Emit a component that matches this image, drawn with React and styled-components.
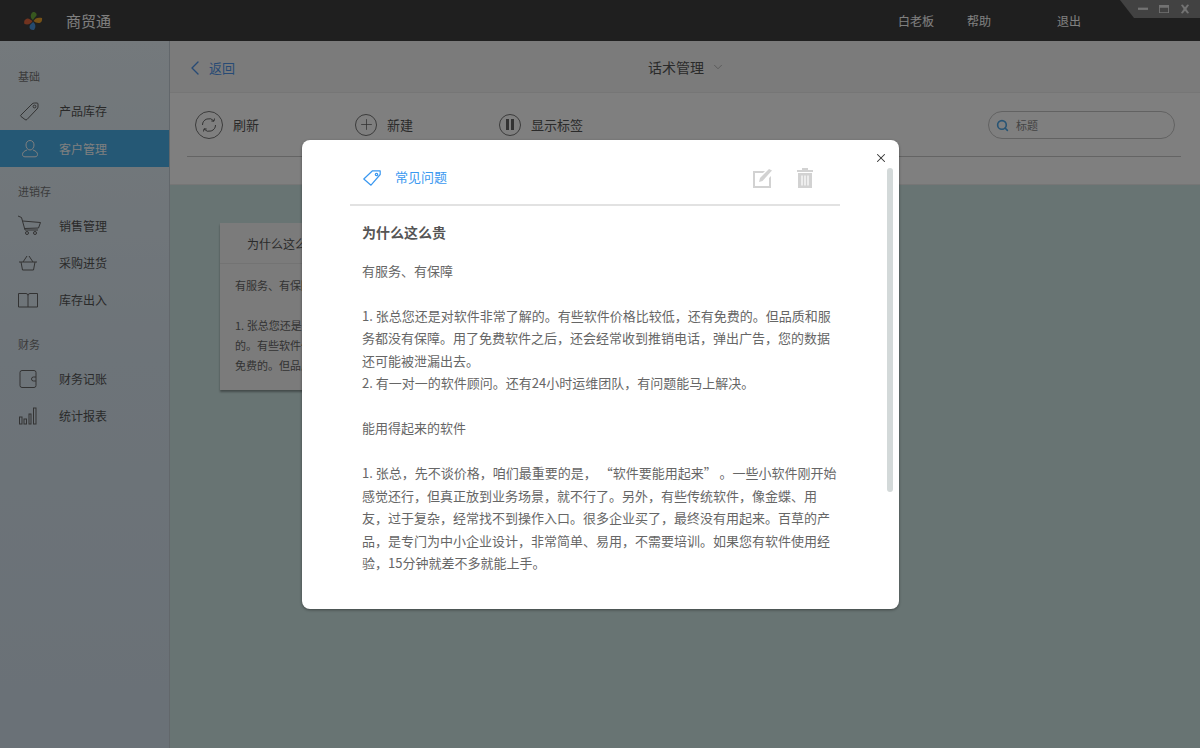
import React from "react";
import styled, { createGlobalStyle } from "styled-components";
import { ChevronLeft, ChevronDown, Plus, Search, X } from "lucide-react";

const GlobalStyle = createGlobalStyle`
  html, body { margin: 0; padding: 0; height: 100%; }
  body {
    font-family: "Noto Sans CJK SC", "Liberation Sans", sans-serif;
    overflow: hidden;
  }
  * { box-sizing: border-box; }
`;

const Page = styled.div`
  position: relative;
  width: 1200px;
  height: 748px;
  display: flex;
  flex-direction: column;
  overflow: hidden;
  background: #d0e8e6;
`;

const TitleBar = styled.header`
  height: 41px;
  flex: none;
  display: flex;
  align-items: center;
  background: #3e3e3e;
  color: #fff;
  position: relative;
`;

const Logo = styled.svg`
  width: 20px;
  height: 20px;
  margin-left: 23px;
`;

const AppName = styled.span`
  margin: -1px 0 0 23px;
  font-size: 15px;
  color: #fff;
`;

const TopLink = styled.a`
  position: absolute;
  top: 12px;
  left: ${(p) => p.$left}px;
  font-size: 12px;
  line-height: 18px;
  color: #fff;
`;

const WindowTab = styled.div`
  position: absolute;
  top: 0;
  right: 0;
  width: 80px;
  height: 18px;
  display: flex;
  align-items: center;
  justify-content: flex-end;
  gap: 11px;
  padding-right: 10px;
  background: #848484;
  clip-path: polygon(0 0, 100% 0, 100% 100%, 14px 100%);
  svg {
    width: 10px;
    height: 10px;
    fill: #e4e4e4;
  }
`;

const Body = styled.div`
  flex: 1;
  display: flex;
  min-height: 0;
`;

const Sidebar = styled.nav`
  width: 170px;
  flex: none;
  background: linear-gradient(180deg, #e8f2f8 0%, #dbe8f2 45%, #d4e2ee 100%);
  border-right: 1px solid #c4ced6;
  padding-top: 26px;
`;

const NavGroup = styled.div`
  margin-bottom: ${(p) => p.$gap}px;
`;

const GroupLabel = styled.div`
  height: 18px;
  margin-bottom: ${(p) => p.$gap}px;
  padding-left: 18px;
  font-size: 11px;
  line-height: 18px;
  color: #777;
`;

const NavItem = styled.div`
  height: ${(p) => p.$height || 37}px;
  display: flex;
  align-items: center;
  padding-left: 18px;
  gap: 21px;
  font-size: 12px;
  background: ${(p) => (p.$active ? "#4ab0ea" : "transparent")};
  color: ${(p) => (p.$active ? "#fff" : "#555")};
  svg {
    width: 20px;
    height: 20px;
    flex: none;
    fill: none;
    overflow: visible;
    stroke: ${(p) => (p.$active ? "#fff" : "#666")};
    stroke-width: 1;
  }
`;

const Main = styled.main`
  flex: 1;
  display: flex;
  flex-direction: column;
  min-width: 0;
`;

const SubHeader = styled.div`
  height: 52px;
  flex: none;
  position: relative;
  display: flex;
  align-items: center;
  padding: 2px 0 0 13px;
  background: #f7f7f7;
  border-bottom: 1px solid #ececec;
`;

const BackLink = styled.a`
  display: flex;
  align-items: center;
  gap: 2px;
  font-size: 13px;
  color: #4f95ea;
`;

const PageTitle = styled.div`
  position: absolute;
  left: 478px;
  top: 16px;
  display: flex;
  align-items: center;
  gap: 7px;
  font-size: 14px;
  line-height: 20px;
  color: #555;
`;

const Toolbar = styled.div`
  height: 92px;
  flex: none;
  background: #ffffff;
  padding: 0 19px 0 17px;
  border-bottom: 1px solid #ececec;
`;

const ToolRow = styled.div`
  height: 64px;
  display: flex;
  align-items: center;
  border-bottom: 1px solid #c8c8c8;
  position: relative;
`;

const ToolButton = styled.div`
  display: flex;
  align-items: center;
  gap: 10px;
  width: ${(p) => p.$width}px;
  padding-left: 8px;
  font-size: 13px;
  color: #555;
`;

const ToolIcon = styled.span`
  width: ${(p) => p.$size}px;
  height: ${(p) => p.$size}px;
  border-radius: 50%;
  border: 1px solid #777;
  display: flex;
  align-items: center;
  justify-content: center;
  color: #666;
`;

const SearchBox = styled.div`
  position: absolute;
  left: 801px;
  top: 18px;
  width: 187px;
  height: 28px;
  border: 1px solid #c4c4c4;
  border-radius: 14px;
  display: flex;
  align-items: center;
  gap: 7px;
  padding-left: 7px;
  font-size: 11px;
  color: #888;
  background: #fff;
`;

const Board = styled.div`
  flex: 1;
  padding: 38px 0 0 50px;
`;

const NoteCard = styled.article`
  width: 300px;
  height: 167px;
  background: #f6f6f6;
  box-shadow: 0 2px 2px rgba(0, 0, 0, 0.35);
`;

const NoteTitle = styled.div`
  height: 41px;
  padding-left: 27px;
  font-size: 12px;
  line-height: 41px;
  color: #555;
  border-bottom: 1px solid #e6e6e6;
  white-space: nowrap;
`;

const NoteText = styled.p`
  margin: 0;
  padding: 11px 15px;
  font-size: 11px;
  line-height: 20px;
  color: #666;
  white-space: nowrap;
  overflow: hidden;
`;

const Overlay = styled.div`
  position: absolute;
  inset: 0;
  background: rgba(0, 0, 0, 0.5);
`;

const Modal = styled.section`
  position: absolute;
  left: 302px;
  top: 140px;
  width: 597px;
  height: 469px;
  background: #fff;
  border-radius: 8px;
  padding: 0 59px 0 48px;
  box-shadow: 0 1px 3px rgba(0, 0, 0, 0.4);
`;

const CloseButton = styled.button`
  position: absolute;
  right: 10px;
  top: 10px;
  width: 16px;
  height: 16px;
  padding: 0;
  border: 0;
  background: none;
  color: #333;
  display: flex;
  align-items: center;
  justify-content: center;
`;

const ScrollThumb = styled.div`
  position: absolute;
  left: 585px;
  top: 28px;
  width: 6px;
  height: 324px;
  border-radius: 3px;
  background: #d3d9d9;
`;

const ModalHead = styled.div`
  height: 66px;
  display: flex;
  align-items: center;
  padding: 9px 24px 0 13px;
  border-bottom: 2px solid #e2e2e2;
`;

const TagIcon = styled.svg`
  width: 18px;
  height: 16px;
  margin-top: 2px;
  fill: none;
  stroke: #3a98f0;
  stroke-width: 1.2;
`;

const TagName = styled.span`
  margin-left: 14px;
  flex: 1;
  font-size: 13px;
  color: #3a98f0;
`;

const HeadIcon = styled.svg`
  width: 22px;
  height: 22px;
  margin: 2px 0 0 20px;
  fill: #d2d2d2;
`;

const ModalBody = styled.div`
  padding: 15px 1px 0 12px;
`;

const ModalTitle = styled.h2`
  margin: 0 0 16.5px;
  font-size: 14px;
  line-height: 22px;
  font-weight: 700;
  color: #555;
`;

const ModalText = styled.p`
  margin: 0;
  font-size: 13px;
  line-height: 22.5px;
  color: #666;
`;

const navGroups = [
  {
    label: "基础",
    labelGap: 6,
    gap: 15,
    items: [
      {
        text: "产品库存",
        height: 39,
        icon: (
          <>
            <path d="M3 14 L14 3 Q15 2 16.5 2 L19 2 Q20 2 20 3 L20 6 Q20 7 19 8 L9 18.5 Q8 19.5 7 18.5 L3 15.5 Q2 14.8 3 14 Z" />
            <circle cx="16.5" cy="5.5" r="1.4" />
          </>
        ),
      },
      {
        text: "客户管理",
        active: true,
        icon: (
          <>
            <path d="M12 1.5 C9.5 1.5 8 3.5 8 6 C8 8.5 9.5 11 12 11 C14.5 11 16 8.5 16 6 C16 3.5 14.5 1.5 12 1.5 Z" />
            <path d="M9 11 C6 12 4.5 13.5 4.5 15.5 C4.5 17 5.5 17.8 7 17.8 L17 17.8 C18.5 17.8 19.5 17 19.5 15.5 C19.5 13.5 18 12 15 11" />
          </>
        ),
      },
    ],
  },
  {
    label: "进销存",
    labelGap: 7,
    gap: 17,
    items: [
      {
        text: "销售管理",
        icon: (
          <>
            <path d="M0 0 L3.5 1.5 L7 14 L20 14 M4.5 5 L22.5 6.5 L20.5 12 L6.5 12.5" />
            <circle cx="9" cy="17" r="1.5" />
            <circle cx="17" cy="17" r="1.5" />
          </>
        ),
      },
      {
        text: "采购进货",
        icon: <path d="M1 9 L19 9 M3 9 L4.5 17 L15.5 17 L17 9 M5 9 L9 3 M15 9 L11 3" />,
      },
      {
        text: "库存出入",
        icon: <path d="M0.5 3.5 L8 3.5 Q10 3.5 10 5.5 L10 17 L0.5 17 Z M10 5.5 Q10 3.5 12 3.5 L19.5 3.5 L19.5 17 L10 17" />,
      },
    ],
  },
  {
    label: "财务",
    labelGap: 7,
    gap: 0,
    items: [
      {
        text: "财务记账",
        icon: (
          <>
            <rect x="2" y="1.5" width="16" height="17" rx="2" />
            <path d="M18 8 L15.5 8 Q13.5 8 13.5 10 Q13.5 12 15.5 12 L18 12" />
          </>
        ),
      },
      {
        text: "统计报表",
        icon: (
          <>
            <rect x="1.5" y="11" width="2.5" height="7" />
            <rect x="6" y="13" width="2.5" height="5" />
            <rect x="11" y="8" width="2" height="10" />
            <rect x="15.5" y="2" width="2.5" height="16" />
          </>
        ),
      },
    ],
  },
];

export default function App() {
  return (
    <Page>
      <GlobalStyle />
      <TitleBar>
        <Logo viewBox="0 0 20 20">
          <path d="M10 9 C7 7 7 3 10 1 C13 1 14 3 13.5 4.5 C12.5 6 11 7 10 9 Z" fill="#6fae3e" />
          <path d="M10.5 10 C12 7 15 6 19 7 C19.5 10 18 12 15.5 12 C13.5 12 12 11 10.5 10 Z" fill="#eda32c" />
          <path d="M10 11 C13 13 13 16.5 11 19 C8.5 19.5 6.5 18 6.5 16 C6.5 14 8.5 12.5 10 11 Z" fill="#4a95de" />
          <path d="M9.5 10 C8 13 5 14 1.5 13 C0.5 10 2 8 4.5 7.5 C6.5 7.5 8 9 9.5 10 Z" fill="#e2673e" />
        </Logo>
        <AppName>商贸通</AppName>
        <TopLink $left={898}>白老板</TopLink>
        <TopLink $left={967}>帮助</TopLink>
        <TopLink $left={1057}>退出</TopLink>
        <WindowTab>
          <svg viewBox="0 0 11 11">
            <rect x="0" y="4" width="11" height="2.5" />
          </svg>
          <svg viewBox="0 0 11 11">
            <path d="M0 1 H11 V10 H0 Z M1 4 V9 H10 V4 Z" fillRule="evenodd" />
          </svg>
          <svg viewBox="0 0 11 11">
            <path d="M1 1 L3 0.5 L5.5 3.5 L8 0.5 L10 1 L7 5.5 L10 10 L8 10.5 L5.5 7.5 L3 10.5 L1 10 L4 5.5 Z" />
          </svg>
        </WindowTab>
      </TitleBar>
      <Body>
        <Sidebar>
          {navGroups.map((group) => (
            <NavGroup key={group.label} $gap={group.gap}>
              <GroupLabel $gap={group.labelGap}>{group.label}</GroupLabel>
              {group.items.map((item) => (
                <NavItem key={item.text} $active={item.active} $height={item.height}>
                  <svg viewBox="0 0 20 20">{item.icon}</svg>
                  {item.text}
                </NavItem>
              ))}
            </NavGroup>
          ))}
        </Sidebar>
        <Main>
          <SubHeader>
            <BackLink>
              <ChevronLeft size={24} strokeWidth={1.4} />
              返回
            </BackLink>
            <PageTitle>
              话术管理
              <ChevronDown size={14} strokeWidth={1.2} color="#999" />
            </PageTitle>
          </SubHeader>
          <Toolbar>
            <ToolRow>
              <ToolButton $width={160}>
                <ToolIcon $size={28}>
                  <svg width="18" height="18" viewBox="0 0 18 18" fill="none" stroke="currentColor" strokeWidth="1">
                    <path d="M2.5 9 A6.5 6.5 0 0 1 14 5 M15.5 9 A6.5 6.5 0 0 1 4 13" />
                    <path d="M14.5 2.5 L14 5.2 L11.3 5 M3.5 15.5 L4 12.8 L6.7 13" />
                  </svg>
                </ToolIcon>
                刷新
              </ToolButton>
              <ToolButton $width={144}>
                <ToolIcon $size={22}>
                  <Plus size={17} strokeWidth={1.1} />
                </ToolIcon>
                新建
              </ToolButton>
              <ToolButton $width={120}>
                <ToolIcon $size={22}>
                  <svg width="10" height="11" viewBox="0 0 10 11" fill="currentColor">
                    <rect x="1" y="0" width="3" height="11" />
                    <rect x="6" y="0" width="3" height="11" />
                  </svg>
                </ToolIcon>
                显示标签
              </ToolButton>
              <SearchBox>
                <Search size={13} strokeWidth={3} color="#4fa8e8" />
                标题
              </SearchBox>
            </ToolRow>
          </Toolbar>
          <Board>
            <NoteCard>
              <NoteTitle>为什么这么贵</NoteTitle>
              <NoteText>
                有服务、有保障
                <br />
                <br />
                1. 张总您还是对
                <br />
                的。有些软件价
                <br />
                免费的。但品质
              </NoteText>
            </NoteCard>
          </Board>
        </Main>
      </Body>
      <Overlay />
      <Modal>
        <CloseButton>
          <X size={14} strokeWidth={1.8} />
        </CloseButton>
        <ScrollThumb />
        <ModalHead>
          <TagIcon viewBox="0 0 18 16">
            <path d="M0.8 9 L9.5 0.8 L17.2 0.8 L17.2 4.5 L8 15.2 Z" strokeLinejoin="round" />
            <circle cx="13.5" cy="4.5" r="1.2" />
          </TagIcon>
          <TagName>常见问题</TagName>
          <HeadIcon viewBox="0 0 22 22">
            <path d="M1 4 H13 L11 6 H3 V19 H17 V11 L19 9 V21 H1 Z" />
            <path d="M8 11 L17 2 L20 3.5 L10.5 14 L7 15 Z" />
          </HeadIcon>
          <HeadIcon viewBox="0 0 22 22">
            <path d="M3 3 H8 V1 H14 V3 H19 V5 H3 Z M4 6 H18 V21 H4 Z" />
            <path d="M8 8.5 V18.5 M11 8.5 V18.5 M14 8.5 V18.5" stroke="#fff" strokeWidth="1.2" />
          </HeadIcon>
        </ModalHead>
        <ModalBody>
          <ModalTitle>为什么这么贵</ModalTitle>
          <ModalText>
            有服务、有保障
            <br />
            <br />
            1. 张总您还是对软件非常了解的。有些软件价格比较低，还有免费的。但品质和服务都没有保障。用了免费软件之后，还会经常收到推销电话，弹出广告，您的数据还可能被泄漏出去。
            <br />
            2. 有一对一的软件顾问。还有24小时运维团队，有问题能马上解决。
            <br />
            <br />
            能用得起来的软件
            <br />
            <br />
            1. 张总，先不谈价格，咱们最重要的是， “软件要能用起来” 。一些小软件刚开始感觉还行，但真正放到业务场景，就不行了。另外，有些传统软件，像金蝶、用友，过于复杂，经常找不到操作入口。很多企业买了，最终没有用起来。百草的产品，是专门为中小企业设计，非常简单、易用，不需要培训。如果您有软件使用经验，15分钟就差不多就能上手。
          </ModalText>
        </ModalBody>
      </Modal>
    </Page>
  );
}
